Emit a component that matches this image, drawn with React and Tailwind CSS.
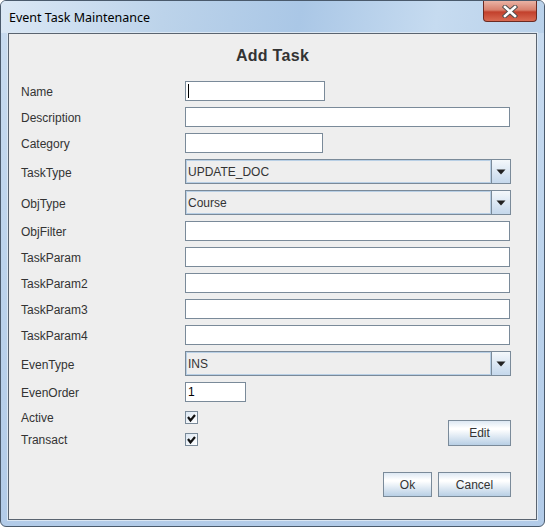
import React from 'react';

const font = { fontFamily: '"Liberation Sans", Arial, sans-serif' };

const TextField = ({ width, value, caret }) => (
    <div className={`${width} h-[20px] bg-white border border-[#7a8a99] flex items-center pl-[2px] text-[12px] text-black relative`}>
        {caret && <span className="w-px h-[14px] bg-black" />}
        {value}
    </div>
);

const Combo = ({ value }) => (
    <div className="w-[326px] h-[25px] border border-[#7a8a99] flex bg-[#eeeeee]">
        <div className="flex-1 border border-[#b8cfe5] flex items-center pl-[1px] pt-[1px] text-[12px] text-[#333333]">{value}</div>
        <div className="w-[19px] border-l border-[#7a8a99] bg-gradient-to-b from-[#f4f8fb] to-[#c5d8ec] flex items-center justify-center">
            <svg width="10" height="6" viewBox="0 0 10 6">
                <path d="M0.5 0.5 H9.5 L5 5.5 Z" fill="#222" />
            </svg>
        </div>
    </div>
);

const Check = () => (
    <div className="w-[13px] h-[13px] border border-[#7a8a99] bg-gradient-to-br from-[#dde8f3] to-white flex items-center justify-center">
        <svg width="11" height="11" viewBox="0 0 11 11">
            <path d="M2 5 L4.5 8.5 L9 3" fill="none" stroke="#111" strokeWidth="2.2" strokeLinejoin="miter" />
            <path d="M3 6 L4.5 8 L4.5 6.5 Z" fill="#111" />
        </svg>
    </div>
);

const Button = ({ width, height, children }) => (
    <button className={`${width} ${height} border border-[#7a8a99] bg-[linear-gradient(to_bottom,#dde8f3_0%,#ffffff_30%,#ffffff_35%,#b8cfe5_100%)] text-[12px] text-[#333333] flex items-center justify-center`}>
        {children}
    </button>
);

const Row = ({ label, h, mt = 'mt-[6px]', children }) => (
    <div className={`flex items-center ${h} ${mt}`}>
        <span className="w-[164px] pt-[2px] text-[12px] text-[#333333]">{label}</span>
        {children}
    </div>
);

export default function App() {
    return (
        <div className="w-[545px] h-[527px] rounded-[6px] border border-[#4a5a6c] bg-gradient-to-b from-[#c9dcf0] via-[#bcd3ec] to-[#b2cbe8] flex flex-col overflow-hidden" style={font}>
            {/* Title bar */}
            <div className="h-[32px] shrink-0 flex items-start bg-[linear-gradient(100deg,#dbe8f5_0%,#bcd3ea_30%,#aac7e6_55%,#c6dbf0_80%,#b9d1ea_100%)]">
                <span className="mt-[8px] ml-[8px] text-[12.5px] text-black" style={{ fontFamily: '"Noto Sans", "Open Sans", sans-serif' }}>Event Task Maintenance</span>
                <div className="ml-auto mr-[7px] w-[54px] h-[21px] rounded-b-[4px] border border-t-0 border-[#6b2a22] bg-[linear-gradient(to_bottom,#eab3a5_0%,#d8806d_45%,#c2402c_55%,#d96a52_100%)] flex items-center justify-center">
                    <svg width="16" height="13" viewBox="0 0 16 13">
                        <path d="M3 2 L13 11 M13 2 L3 11" stroke="#4d4d4d" strokeWidth="4.5" strokeLinecap="square" />
                        <path d="M3 2 L13 11 M13 2 L3 11" stroke="#ffffff" strokeWidth="2.6" strokeLinecap="square" />
                    </svg>
                </div>
            </div>

            {/* Client area */}
            <div className="mx-[7px] h-[487px] border border-[#5a6470] shadow-[0_0_0_1px_#dbe7f3] bg-[#eeeeee] flex flex-col pl-[12px] pr-[25px]">
                <div className="mt-[10px] h-[19px] text-center text-[16px] font-bold tracking-[0.3px] text-[#333333] -mr-[13px]">Add Task</div>

                <Row label="Name" h="h-[20px]" mt="mt-[18px]"><TextField width="w-[140px]" caret /></Row>
                <Row label="Description" h="h-[20px]"><TextField width="w-[325px]" /></Row>
                <Row label="Category" h="h-[20px]"><TextField width="w-[138px]" /></Row>
                <Row label="TaskType" h="h-[25px]"><Combo value="UPDATE_DOC" /></Row>
                <Row label="ObjType" h="h-[25px]"><Combo value="Course" /></Row>
                <Row label="ObjFilter" h="h-[20px]"><TextField width="w-[325px]" /></Row>
                <Row label="TaskParam" h="h-[20px]"><TextField width="w-[325px]" /></Row>
                <Row label="TaskParam2" h="h-[20px]"><TextField width="w-[325px]" /></Row>
                <Row label="TaskParam3" h="h-[20px]"><TextField width="w-[325px]" /></Row>
                <Row label="TaskParam4" h="h-[20px]"><TextField width="w-[325px]" /></Row>
                <Row label="EvenType" h="h-[25px]"><Combo value="INS" /></Row>
                <Row label="EvenOrder" h="h-[20px]"><TextField width="w-[61px]" value="1" /></Row>

                <div className="flex mt-[4px]">
                    <div className="flex flex-col">
                        <Row label="Active" h="h-[22px]" mt="mt-0"><Check /></Row>
                        <Row label="Transact" h="h-[22px]" mt="mt-0"><Check /></Row>
                    </div>
                    <div className="ml-auto mt-[14px]">
                        <Button width="w-[63px]" height="h-[26px]">Edit</Button>
                    </div>
                </div>

                <div className="flex justify-end gap-[6px] mt-[22px]">
                    <Button width="w-[49px]" height="h-[25px]">Ok</Button>
                    <Button width="w-[73px]" height="h-[25px]">Cancel</Button>
                </div>
            </div>
        </div>
    );
}
